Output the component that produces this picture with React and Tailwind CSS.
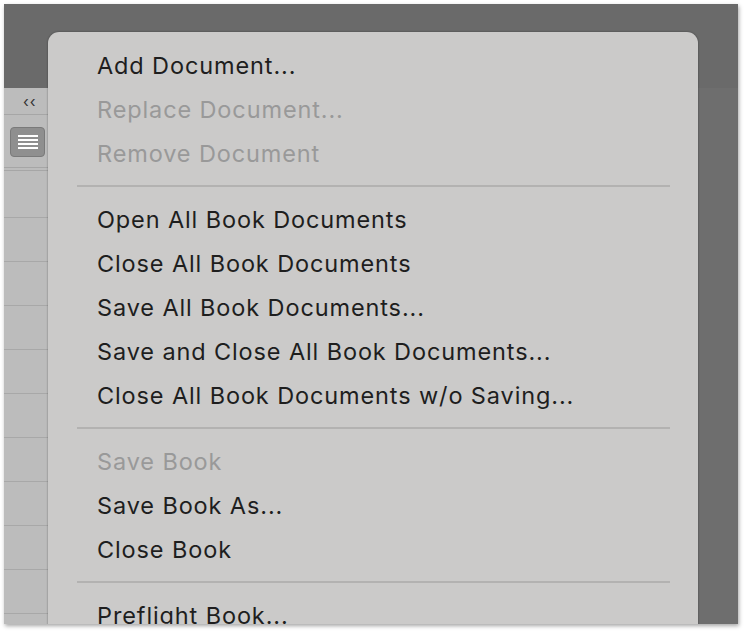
import React from 'react';

const groups = [
  [
    { label: 'Add Document...' },
    { label: 'Replace Document...', disabled: true },
    { label: 'Remove Document', disabled: true },
  ],
  [
    { label: 'Open All Book Documents' },
    { label: 'Close All Book Documents' },
    { label: 'Save All Book Documents...' },
    { label: 'Save and Close All Book Documents...' },
    { label: 'Close All Book Documents w/o Saving...' },
  ],
  [
    { label: 'Save Book', disabled: true },
    { label: 'Save Book As...' },
    { label: 'Close Book' },
  ],
  [{ label: 'Preflight Book...' }],
];

function MenuItem({ label, disabled }) {
  return (
    <div
      className={`h-[44px] flex items-center pl-[49px] pt-[2px] text-[23.5px] leading-none tracking-[0.88px] whitespace-nowrap ${
        disabled ? 'text-[#999999]' : 'text-[#1e1e1e]'
      }`}
    >
      {label}
    </div>
  );
}

function SidePanel() {
  return (
    <div className="w-[44px] bg-[#bcbcbc] flex flex-col overflow-hidden">
      <div className="h-[27px] shrink-0 flex items-center pl-[19px] border-b border-[#a6a6a6] text-[15px] leading-none text-[#333] tracking-[1px]">
        ‹‹
      </div>
      <div className="h-[56px] shrink-0 flex items-start pt-[12px] pl-[6px] border-b-[4px] border-double border-[#a6a6a6]">
        <div className="w-[35px] h-[30px] rounded-[4px] bg-[#8f8f8f] border border-[#7a7a7a] flex flex-col items-center justify-center gap-[2px]">
          <div className="w-[20px] h-[2px] bg-white" />
          <div className="w-[20px] h-[2px] bg-white" />
          <div className="w-[20px] h-[2px] bg-white" />
          <div className="w-[20px] h-[2px] bg-white" />
        </div>
      </div>
      <div className="h-[47px] shrink-0 border-b border-[#a8a8a8]" />
      {Array.from({ length: 10 }).map((_, i) => (
        <div key={i} className="h-[44px] shrink-0 border-b border-[#a8a8a8]" />
      ))}
    </div>
  );
}

export default function App() {
  return (
    <div
      className="w-[746px] h-[632px] bg-white p-[4px] overflow-hidden"
      style={{ fontFamily: 'Inter, "Noto Sans", sans-serif' }}
    >
      <div className="relative w-[734px] h-[620px] bg-[#6c6c6c] flex flex-col overflow-hidden shadow-[1px_2px_4px_rgba(0,0,0,0.35)]">
        <div className="h-[84px] shrink-0 bg-[#6a6a6a]" />
        <div className="flex-1 flex min-h-0">
          <SidePanel />
          <div className="flex-1 bg-[#6e6e6e]" />
        </div>

        <div className="absolute left-[44px] top-[28px] w-[650px] h-[600px] bg-[#cbcac9] rounded-t-[11px] pt-[11px] shadow-[0_0_2px_rgba(0,0,0,0.45)]">
          {groups.map((group, gi) => (
            <div key={gi}>
              {gi > 0 && (
                <div className="h-[22px] flex items-center">
                  <div className="ml-[29px] w-[593px] h-[2px] bg-[#b3b2b1]" />
                </div>
              )}
              {group.map((item) => (
                <MenuItem key={item.label} {...item} />
              ))}
            </div>
          ))}
        </div>
      </div>
    </div>
  );
}
